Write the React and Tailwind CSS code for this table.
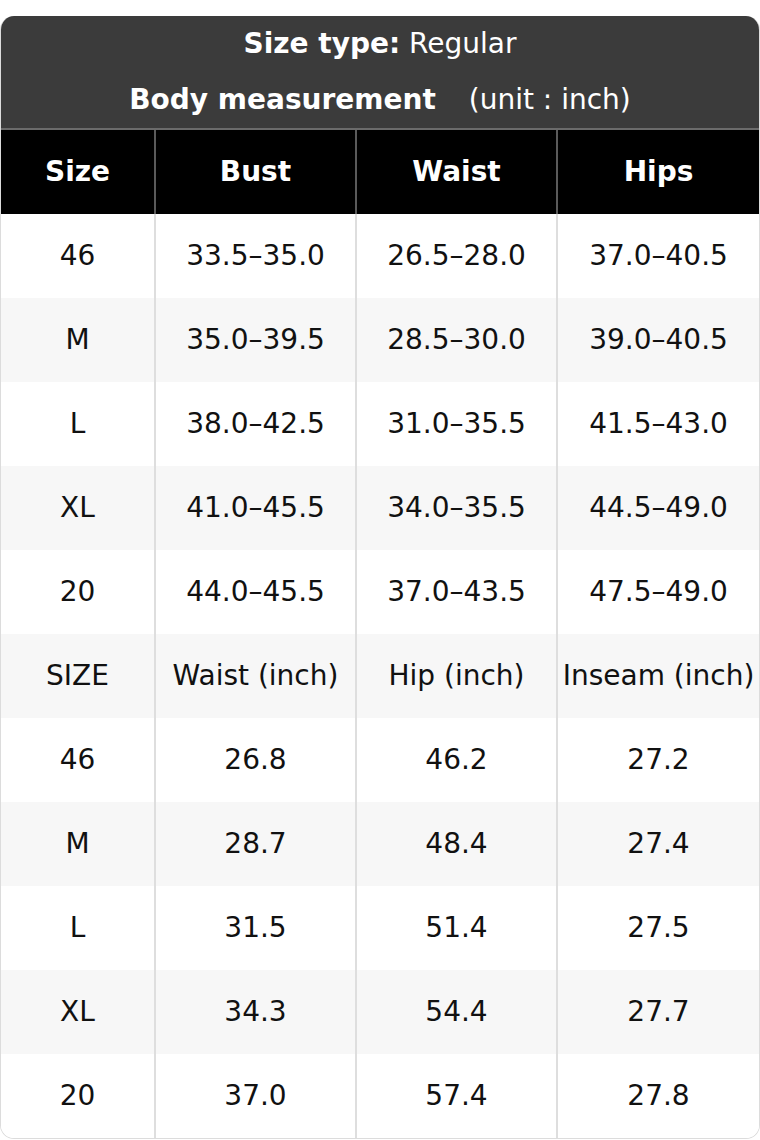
const HEAD = ["Size", "Bust", "Waist", "Hips"];

const ROWS = [
  ["46", "33.5–35.0", "26.5–28.0", "37.0–40.5"],
  ["M", "35.0–39.5", "28.5–30.0", "39.0–40.5"],
  ["L", "38.0–42.5", "31.0–35.5", "41.5–43.0"],
  ["XL", "41.0–45.5", "34.0–35.5", "44.5–49.0"],
  ["20", "44.0–45.5", "37.0–43.5", "47.5–49.0"],
  ["SIZE", "Waist (inch)", "Hip (inch)", "Inseam (inch)"],
  ["46", "26.8", "46.2", "27.2"],
  ["M", "28.7", "48.4", "27.4"],
  ["L", "31.5", "51.4", "27.5"],
  ["XL", "34.3", "54.4", "27.7"],
  ["20", "37.0", "57.4", "27.8"],
];

const COLS = "grid grid-cols-[155px_201px_201px_1fr]";

export default function App() {
  return (
    <div className="w-[760px] h-[1140px] bg-white pt-4" style={{ fontFamily: '"DejaVu Sans", sans-serif' }}>
      <div className="rounded-[14px] overflow-hidden border border-[#dcdcdc] border-t-0 text-[28px]">
        {/* title block */}
        <div className="bg-[#3b3b3b] text-white text-center leading-[56px] border-b-2 border-[#6b6b6b]">
          <div>
            <span className="font-bold">Size type:</span> Regular
          </div>
          <div>
            <span className="font-bold">Body measurement</span>
            <span className="ml-[33px]">(unit : inch)</span>
          </div>
        </div>

        <div className={`${COLS} bg-black text-white font-bold h-[84px]`}>
          {HEAD.map((h, i) => (
            <div
              key={h}
              className={`flex items-center justify-center ${i < 3 ? "border-r-2 border-[#5a5a5a]" : ""}`}
            >
              {h}
            </div>
          ))}
        </div>

        {ROWS.map((r, ri) => (
          <div key={ri} className={`${COLS} h-[84px] text-[#111] ${ri % 2 ? "bg-[#f7f7f7]" : "bg-white"}`}>
            {r.map((c, ci) => (
              <div
                key={ci}
                className={`flex items-center justify-center whitespace-nowrap ${ci < 3 ? "border-r-2 border-[#dedede]" : ""}`}
              >
                {c}
              </div>
            ))}
          </div>
        ))}
      </div>
    </div>
  );
}
